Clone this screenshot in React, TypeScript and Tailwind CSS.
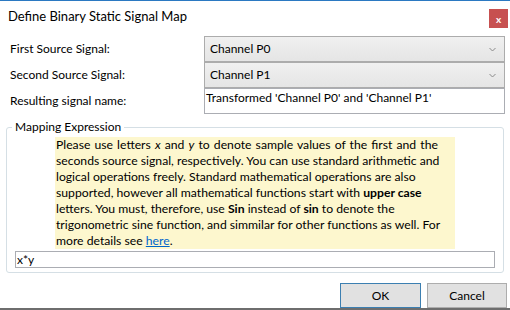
import React from 'react';

const ComboBox: React.FC<{ value: string }> = ({ value }) => (
  <div className="flex h-[26px] items-center justify-between border border-[#acacac] bg-gradient-to-b from-[#f0f0f0] to-[#e5e5e5] pl-[5px] pr-[8px]">
    <span>{value}</span>
    <svg width="7" height="5" viewBox="0 0 7 5" className="text-[#8a8a8a]">
      <path d="M0.5 1 L3.5 4 L6.5 1" fill="none" stroke="currentColor" strokeWidth="1" />
    </svg>
  </div>
);

const DialogButton: React.FC<{ label: string; focused?: boolean }> = ({ label, focused }) => (
  <button
    className={
      focused
        ? 'flex h-[25px] w-[81px] items-center justify-center border border-[#3c7fb1] bg-[#e1e1e1]'
        : 'flex h-[25px] w-[80px] items-center justify-center border border-[#adadad] bg-[#e1e1e1]'
    }
  >
    {label}
  </button>
);

export default function App() {
  return (
    <div className="flex h-[310px] w-[510px] flex-col overflow-hidden border-t border-[#2b79c2] bg-white font-['Lato',sans-serif] text-[12px] leading-[16px] text-black">
      {/* Title bar */}
      <div className="flex h-[34px] items-start justify-between">
        <span className="ml-[8px] mt-[7px] text-[13px]">Define Binary Static Signal Map</span>
        <div className="mr-[2px] mt-[8px] flex h-[19px] w-[19px] items-center justify-center bg-[#c75050] text-[10px] font-bold text-white">
          x
        </div>
      </div>

      {/* Signal fields */}
      <div className="mt-[1px] grid grid-cols-[194px_301px] pl-[10px]">
        <div className="flex items-center">First Source Signal:</div>
        <ComboBox value="Channel P0" />
        <div className="flex items-center">Second Source Signal:</div>
        <ComboBox value="Channel P1" />
        <div className="flex items-center">Resulting signal name:</div>
        <div className="h-[26px] border border-[#abadb3] pl-[1px] pt-[1px]">
          Transformed 'Channel P0' and 'Channel P1'
        </div>
      </div>

      {/* Mapping expression */}
      <fieldset className="mx-[6px] mt-[5px] rounded-[3px] border border-[#d5dfe5] pb-[4px]">
        <legend className="ml-[5px] px-[3px]">Mapping Expression</legend>
        <div className="ml-[48px] mt-[2px] h-[112px] w-[400px] whitespace-nowrap bg-[#fdf7ce] pl-[1px] text-[12.2px]">
          <span className="[word-spacing:1px]">
            Please use letters <i>x</i> and <i>y</i> to denote sample values of the first and the
          </span>
          <br />
          seconds source signal, respectively. You can use standard arithmetic and
          <br />
          logical operations freely. Standard mathematical operations are also
          <br />
          supported, however all mathematical functions start with <b>upper case</b>
          <br />
          letters. You must, therefore, use <b>Sin</b> instead of <b>sin</b> to denote the
          <br />
          trigonometric sine function, and simmilar for other functions as well. For
          <br />
          more details see <span className="text-[#0066cc] underline">here</span>.
        </div>
        <div className="mx-[8px] mt-[2px] flex h-[17px] items-center border border-[#abadb3] pl-[1px]">x*y</div>
      </fieldset>

      {/* Buttons */}
      <div className="mt-auto flex justify-end gap-[6px] border-b-2 border-[#6e6e6e] pr-[3px]">
        <DialogButton label="OK" focused />
        <DialogButton label="Cancel" />
      </div>
    </div>
  );
}
